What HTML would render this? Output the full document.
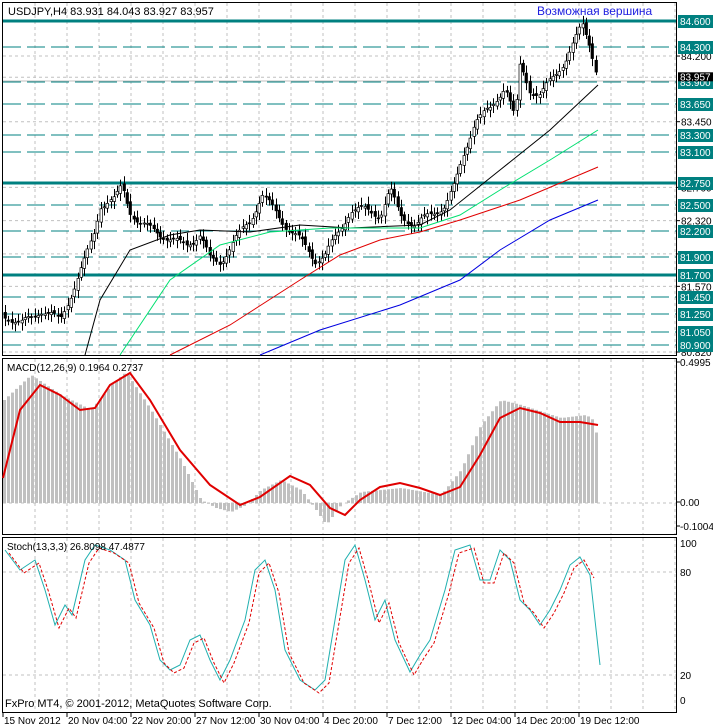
<!DOCTYPE html>
<html><head><meta charset="utf-8"><style>
html,body{margin:0;padding:0;background:#fff;}
svg{display:block;font-family:"Liberation Sans",sans-serif;}
</style></head><body>
<svg id="s" width="713" height="728" xmlns="http://www.w3.org/2000/svg">
<rect width="713" height="728" fill="#fff"/>
<g id="g"></g>
<text x="8" y="15" font-size="11">USDJPY,H4  83.931 84.043 83.927 83.957</text>
<text x="537" y="15" font-size="12" fill="#2020e0">Возможная вершина</text>
<text x="7" y="371" font-size="10">MACD(12,26,9) 0.1964 0.2737</text>
<text x="7" y="550" font-size="10">Stoch(13,3,3) 26.8098 47.4877</text>
<text x="5" y="707" font-size="11">FxPro MT4, © 2001-2012, MetaQuotes Software Corp.</text>
</svg>
<script>
var g=document.getElementById('g'),h='';
function L(x1,y1,x2,y2,c,w,d){h+='<line x1="'+x1+'" y1="'+y1+'" x2="'+x2+'" y2="'+y2+'" stroke="'+c+'" stroke-width="'+(w||1)+'"'+(d?' stroke-dasharray="'+d+'"':'')+'/>';}
function T(x,y,t,c,s){h+='<text x="'+x+'" y="'+y+'" font-size="'+(s||10)+'" fill="'+(c||'#000')+'">'+t+'</text>';}
function P(pts,c,w,d){h+='<polyline fill="none" stroke="'+c+'" stroke-width="'+(w||1)+'"'+(d?' stroke-dasharray="'+d+'"':'')+' points="'+pts.map(p=>p.join(',')).join(' ')+'"/>';}
function interp(pts,x){for(var i=1;i<pts.length;i++){if(x<=pts[i][0]){var a=pts[i-1],b=pts[i];return a[1]+(b[1]-a[1])*(x-a[0])/(b[0]-a[0]);}}return pts[pts.length-1][1];}
var R=676;
[[2,355],[358,534],[537,712]].forEach(p=>{h+='<rect x="2.5" y="'+(p[0]+.5)+'" width="'+(R-2)+'" height="'+(p[1]-p[0])+'" fill="none" stroke="#000"/>';});
for(var x=35;x<R;x+=32){L(x,3,x,355,'#c0c0c0',1,'3,3');L(x,359,x,534,'#c0c0c0',1,'3,3');L(x,538,x,712,'#c0c0c0',1,'3,3');}
function py(p){return 21+(84.6-p)*87.57;}
[84.2,83.957,83.45,82.7,82.32,81.94,81.57,80.82].forEach(p=>L(3,py(p),R,py(p),'#c0c0c0',1,'3,3'));
L(3,81,R,81,'#c0c0c0',1);
var lv=[84.6,84.3,83.9,83.65,83.3,83.1,82.75,82.5,82.2,81.9,81.7,81.45,81.25,81.05,80.9],thick=[84.6,82.75,81.7];
lv.forEach(p=>{var y=Math.round(py(p));if(thick.includes(p))L(3,y,R,y,'#008080',3);else L(3,y,R,y,'#008080',1,'18,6');});
var path=[[5,315],[20,325],[40,310],[60,320],[75,285],[85,260],[95,230],[100,205],[115,200],[122,185],[130,210],[140,225],[155,230],[170,240],[185,245],[200,235],[210,260],[220,262],[235,240],[250,220],[262,195],[270,205],[285,225],[300,240],[315,260],[325,255],[340,230],[350,210],[365,210],[380,215],[390,190],[400,215],[415,225],[430,215],[445,205],[455,185],[465,150],[475,120],[490,110],[505,85],[515,120],[520,65],[530,90],[540,95],[555,75],[565,60],[575,40],[582,25],[590,45],[595,65],[598,80]];
var prev=interp(path,4);
for(var x=5;x<=598;x+=3.3){var c=interp(path,x)+Math.sin(x*1.7)*4,o=prev+Math.sin(x*0.9)*2;var hi=Math.min(o,c)-3-Math.abs(Math.sin(x*2.3))*5,lo=Math.max(o,c)+3+Math.abs(Math.cos(x*1.3))*5;var xx=Math.round(x);L(xx+.5,hi,xx+.5,lo,'#000');var t=Math.min(o,c),b=Math.max(o,c);if(b-t<1)b=t+1;h+='<rect x="'+(xx-1)+'" y="'+t+'" width="2.5" height="'+(b-t)+'" fill="'+(c<o?'#fff':'#000')+'" stroke="#000" stroke-width="0.7"/>';prev=c;}
P([[85,355],[100,300],[130,250],[170,235],[200,230],[250,232],[300,225],[350,228],[420,225],[450,210],[500,170],[550,130],[598,85]],'#000');
P([[120,355],[170,280],[220,245],[270,232],[330,228],[380,228],[420,228],[460,215],[500,190],[550,160],[598,130]],'#00e070');
P([[170,355],[230,325],[300,280],[340,255],[380,240],[420,232],[460,220],[520,200],[598,167]],'#e00000');
P([[260,355],[320,330],[400,305],[460,280],[500,250],[550,220],[598,200]],'#0000e0');
var tl=[[84.2,'84.200'],[83.45,'83.450'],[82.7,'82.700'],[82.32,'82.320'],[81.94,'81.940'],[81.57,'81.570'],[80.82,'80.820']];
tl.forEach(t=>{var y=py(t[0]);L(R,y,R+4,y,'#000');T(681,y+4,t[1]);});
lv.forEach(p=>{var y=Math.round(py(p));h+='<rect x="678" y="'+(y-6)+'" width="35" height="13" fill="#008080"/>';T(680,y+4,p.toFixed(3),'#fff');});
var cy=py(83.957);h+='<rect x="678" y="'+(cy-5)+'" width="35" height="9" fill="#000"/>';T(680,cy+3,'83.957','#fff');
var z=503;L(3,z,R,z,'#c0c0c0',1,'3,3');
var hist=[[3,400],[30,375],[60,395],[90,410],[110,385],[125,372],[150,410],[180,460],[200,500],[215,508],[230,512],[245,505],[260,490],[280,480],[300,490],[315,510],[325,525],[340,505],[360,492],[400,488],[440,495],[460,470],[480,425],[500,400],[520,405],[560,418],[585,415],[592,420],[598,445]];
for(var x=3;x<=598;x+=4){var y=interp(hist,x);h+='<rect x="'+x+'" y="'+Math.min(y,z)+'" width="3" height="'+Math.abs(z-y)+'" fill="#c0c0c0"/>';}
P([[3,478],[20,410],[40,385],[60,395],[80,410],[95,408],[110,385],[130,373],[150,400],[180,450],[210,485],[240,505],[260,497],[290,476],[310,485],[330,508],[345,515],[360,500],[380,487],[400,483],[420,488],[440,495],[460,487],[480,455],[500,418],[520,408],[540,413],[560,422],[580,422],[598,425]],'#e00000',2);
[[366,'0.4995'],[506,'0.00'],[530,'-0.1004']].forEach(t=>{L(R,t[0]-4,R+4,t[0]-4,'#000');T(680,t[0],t[1]);});
L(3,572,R,572,'#c0c0c0',1,'3,3');L(3,675,R,675,'#c0c0c0',1,'3,3');
var st=[[5,550],[20,570],[35,560],[45,590],[55,625],[65,605],[72,615],[85,560],[95,545],[110,550],[125,560],[135,600],[150,625],[160,660],[170,670],[180,665],[190,640],[200,635],[210,660],[220,680],[230,660],[245,620],[255,570],[265,560],[275,590],[285,650],[300,680],[315,690],[325,680],[335,620],[345,560],[355,545],[365,580],[375,620],[385,600],[395,640],[410,672],[420,655],[430,640],[445,590],[455,550],[470,545],[480,580],[490,580],[500,550],[510,560],[520,600],[530,610],[540,625],[550,610],[560,590],[570,565],[580,557],[590,575],[600,665]];
P(st,'#20b0b0',1);
P(st.slice(0,-1).map(p=>[p[0]+4,p[1]+3]),'#e00000',1,'3,2');
[[547,'100'],[576,'80'],[679,'20'],[704,'0']].forEach(t=>T(680,t[0],t[1]));
var tx=['15 Nov 2012','20 Nov 04:00','22 Nov 20:00','27 Nov 12:00','30 Nov 04:00','4 Dec 20:00','7 Dec 12:00','12 Dec 04:00','14 Dec 20:00','19 Dec 12:00'];
tx.forEach((t,i)=>{var x=3+i*64;L(x,712,x,717,'#000');T(x+1,724,t);});
g.innerHTML=h;
</script>
</body></html>
